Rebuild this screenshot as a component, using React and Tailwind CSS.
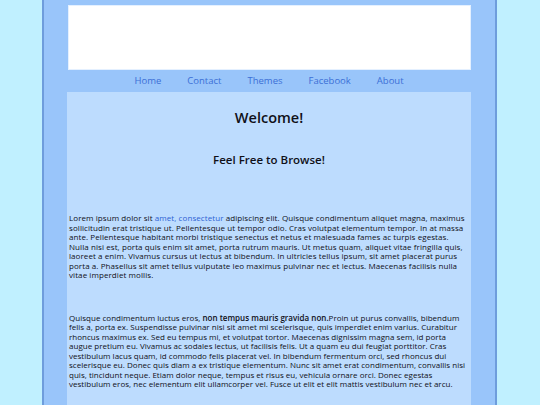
export default function App() {
  const font = { fontFamily: '"Open Sans", "Noto Sans", sans-serif' };
  return (
    <div className="min-h-[405px] bg-[#c0f0ff] flex justify-center" style={font}>
      <div className="w-[455px] ml-[-2px] bg-[#99c5fa] border-x-2 border-[#6e9ddc] flex flex-col items-center pt-[5px]">
        <div className="w-[403px] h-[65px] bg-white border border-[#e4f0ff]"></div>
        <nav className="w-[404px] h-[22px] pt-[1px] flex justify-center items-center gap-[26px] text-[9.5px] text-[#3b6fd6]">
          <a>Home</a>
          <a>Contact</a>
          <a>Themes</a>
          <a>Facebook</a>
          <a>About</a>
        </nav>
        <main className="w-[404px] bg-[#bddcfe] px-[2px] text-[#101018] pb-[40px]">
          <h1 className="text-center text-[14.5px] font-semibold leading-[20px] mt-[16px]">Welcome!</h1>
          <h2 className="text-center text-[11.5px] font-semibold leading-[16px] mt-[24px]">Feel Free to Browse!</h2>
          <p className="text-[8px] leading-[9.5px] mt-[45px] tracking-[0.08px] font-medium">
            Lorem ipsum dolor sit <a className="text-[#2d62d4]">amet, consectetur</a> adipiscing elit. Quisque condimentum aliquet magna, maximus sollicitudin erat tristique ut. Pellentesque ut tempor odio. Cras volutpat elementum tempor. In at massa ante. Pellentesque habitant morbi tristique senectus et netus et malesuada fames ac turpis egestas. Nulla nisi est, porta quis enim sit amet, porta rutrum mauris. Ut metus quam, aliquet vitae fringilla quis, laoreet a enim. Vivamus cursus ut lectus at bibendum. In ultricies tellus ipsum, sit amet placerat purus porta a. Phasellus sit amet tellus vulputate leo maximus pulvinar nec et lectus. Maecenas facilisis nulla vitae imperdiet mollis.
          </p>
          <p className="text-[8px] leading-[9.5px] mt-[33px] tracking-[0.02px] font-medium">
            Quisque condimentum luctus eros, <b className="font-semibold">non tempus mauris gravida non.</b>Proin ut purus convallis, bibendum felis a, porta ex. Suspendisse pulvinar nisi sit amet mi scelerisque, quis imperdiet enim varius. Curabitur rhoncus maximus ex. Sed eu tempus mi, et volutpat tortor. Maecenas dignissim magna sem, id porta augue pretium eu. Vivamus ac sodales lectus, ut facilisis felis. Ut a quam eu dui feugiat porttitor. Cras vestibulum lacus quam, id commodo felis placerat vel. In bibendum fermentum orci, sed rhoncus dui scelerisque eu. Donec quis diam a ex tristique elementum. Nunc sit amet erat condimentum, convallis nisi quis, tincidunt neque. Etiam dolor neque, tempus et risus eu, vehicula ornare orci. Donec egestas vestibulum eros, nec elementum elit ullamcorper vel. Fusce ut elit et elit mattis vestibulum nec et arcu.
          </p>
        </main>
      </div>
    </div>
  );
}
